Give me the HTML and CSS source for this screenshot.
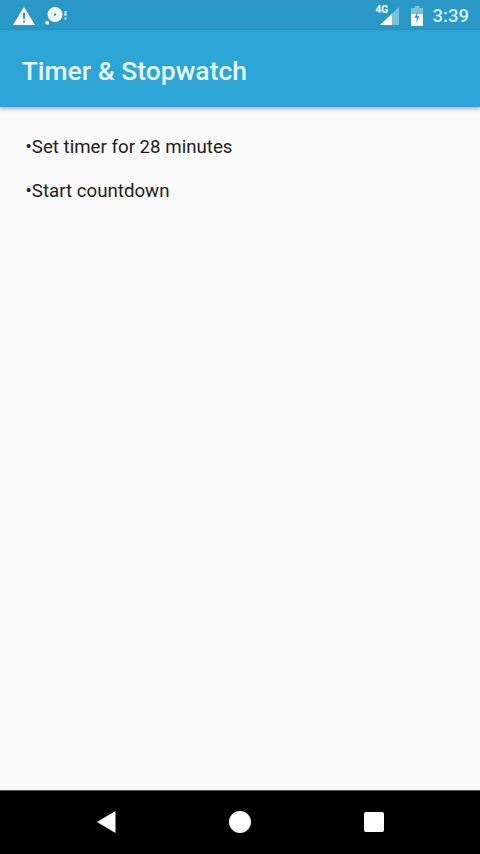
FILE: index.html
```html
<!DOCTYPE html>
<html lang="en">
<head>
  <meta charset="UTF-8">
  <meta name="viewport" content="width=device-width, initial-scale=1.0">
  <title>Timer &amp; Stopwatch</title>
  <link rel="stylesheet" href="styles.css">
</head>
<body>

<div class="status-bar">
  <div class="status-left">
    <!-- warning triangle -->
    <svg class="warn-icon" width="24" height="20" viewBox="0 0 24 20">
      <path fill="#fff" fill-rule="evenodd" d="M12 1 L23 19 H1 Z M11 7 V13 H13 V7 Z M11 14.5 V16.5 H13 V14.5 Z"/>
    </svg>
    <!-- disc with alert -->
    <svg class="disc-icon" width="22" height="20" viewBox="0 0 22 20">
      <path fill="#fff" fill-rule="evenodd" d="M10 1 A7.5 7.5 0 1 1 10 16 A7.5 7.5 0 1 1 10 1 Z M10 7.2 A1.3 1.3 0 1 0 10 9.8 A1.3 1.3 0 1 0 10 7.2 Z"/>
      <circle cx="10" cy="8.5" r="3.4" fill="none" stroke="#cfeaf5" stroke-width="1"/>
      <rect x="0.5" y="15" width="3.5" height="3.5" rx="1" fill="#fff"/>
      <rect x="19.5" y="5" width="2" height="5" fill="#cfeaf5"/>
      <rect x="19.5" y="11.5" width="2" height="2" fill="#cfeaf5"/>
    </svg>
  </div>
  <div class="status-right">
    <div class="signal">
      <span class="net-label">4G</span>
      <svg width="20" height="18" viewBox="0 0 20 18">
        <path fill="#7cc0dc" d="M19 0 V18 H0 Z"/>
        <path fill="#fff" d="M12 7 V18 H0 Z"/>
      </svg>
    </div>
    <svg class="battery" width="14" height="20" viewBox="0 0 14 20">
      <path fill="#7cc0dc" d="M4.5 0 H9.5 V2 H13 V8 H1 V2 H4.5 Z"/>
      <path fill="#fff" d="M1 8 H13 V20 H1 Z"/>
      <path fill="#2a9fcf" d="M7.8 5 L4.5 12 H6.8 L6.2 17 L9.5 10 H7.2 Z"/>
    </svg>
    <span class="clock">3:39</span>
  </div>
</div>

<header class="app-bar">
  <h1>Timer &amp; Stopwatch</h1>
</header>

<main class="content">
  <p>•Set timer for 28 minutes</p>
  <p>•Start countdown</p>
</main>

<nav class="nav-bar">
  <svg width="20" height="24" viewBox="0 0 20 24">
    <path fill="#fff" d="M19.5 1 V23 L1 12 Z"/>
  </svg>
  <div class="home-btn"></div>
  <div class="recent-btn"></div>
</nav>

</body>
</html>
```

FILE: styles.css
```css
html, body {
  height: 100%;
}

body {
  margin: 0;
  display: flex;
  flex-direction: column;
  font-family: Roboto, "Liberation Sans", sans-serif;
  background-color: #fafafa;
}

.status-bar {
  box-sizing: border-box;
  height: 30px;
  padding: 1px 11px 0 12px;
  background-color: #2998c6;
  display: flex;
  justify-content: space-between;
  align-items: center;
  flex-shrink: 0;
}

.status-left,
.status-right {
  display: flex;
  align-items: center;
}

.disc-icon {
  margin-left: 9px;
}

.signal {
  position: relative;
  display: flex;
  margin-right: 10px;
}

.net-label {
  position: absolute;
  top: -3px;
  left: -4px;
  font-size: 10px;
  font-weight: 700;
  color: #fff;
}

.battery {
  margin-right: 9px;
}

.clock {
  color: #d6eef8;
  font-size: 18.5px;
  font-weight: 500;
}

.app-bar {
  box-sizing: border-box;
  height: 77px;
  padding: 4px 0 0 21.5px;
  background-color: #2ca4d5;
  display: flex;
  align-items: center;
  box-shadow: 0 2px 4px rgba(0, 0, 0, 0.3);
  flex-shrink: 0;
}

.app-bar h1 {
  margin: 0;
  color: #e6f7fc;
  font-size: 26.5px;
  font-weight: 500;
}

.content {
  flex: 1;
  padding: 30px 25.5px 0;
  color: #212121;
  font-size: 18.7px;
}

.content p {
  margin: 0 0 23px;
  line-height: 21px;
}

.nav-bar {
  box-sizing: border-box;
  height: 64px;
  border-top: 1px solid #555;
  padding-bottom: 2px;
  background-color: #000;
  display: flex;
  justify-content: center;
  align-items: center;
  gap: 113px;
  flex-shrink: 0;
}

.home-btn {
  width: 22px;
  height: 22px;
  border-radius: 50%;
  background-color: #fff;
}

.recent-btn {
  width: 20px;
  height: 20px;
  border-radius: 2px;
  background-color: #fff;
}
```
